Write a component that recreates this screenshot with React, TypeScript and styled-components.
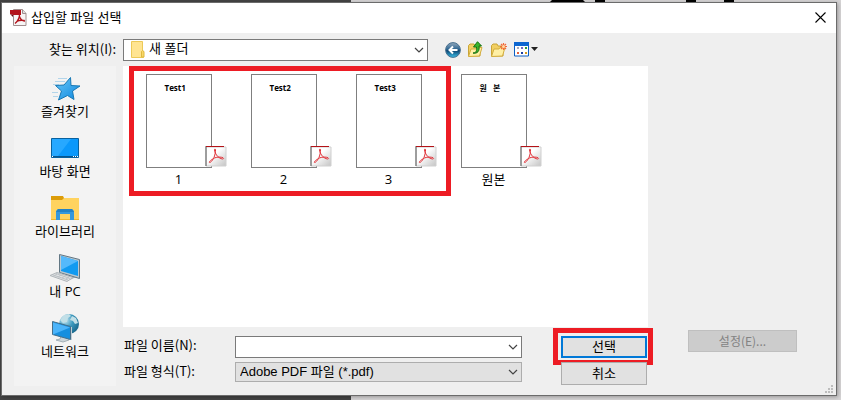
import React from "react";
import styled, { createGlobalStyle } from "styled-components";

const GlobalStyle = createGlobalStyle`
  *, *::before, *::after { box-sizing: border-box; }
  body { margin: 0; color: #000; }
  body, button, input, select {
    font-family: "Open Sans", "Noto Sans CJK KR", sans-serif;
    font-size: 13px;
    line-height: 18px;
  }
`;

const gulimLike = `"Liberation Sans", "Noto Sans CJK KR", sans-serif`;

const Backdrop = styled.div`
  position: relative;
  display: flex;
  min-height: 100vh;
  padding: 2px 4px 4px 1px;
  background: linear-gradient(to right, #444 351px, #d6d4d5 351px);
`;

const BackdropInk = styled.svg`
  position: absolute;
  top: 0;
  left: 351px;
`;

const Dialog = styled.section`
  position: relative;
  display: flex;
  flex: 1;
  flex-direction: column;
  min-width: 0;
  border: 1px solid #6b6b6b;
  background: #efefef;
  box-shadow: 1px 1px 4px rgba(0, 0, 0, 0.3);
`;

const TitleBar = styled.header`
  display: flex;
  align-items: center;
  gap: 4px;
  height: 30px;
  padding: 0 10px 2px 8px;
  background: #fff;
`;

const Title = styled.h1`
  flex: 1;
  margin: 0;
  font-size: 13px;
  font-weight: 400;
`;

const PlainButton = styled.button`
  display: flex;
  padding: 0;
  border: 0;
  background: none;
`;

const Body = styled.div`
  display: grid;
  flex: 1;
  grid-template-columns: 102px minmax(0, 1fr) 181px;
  grid-template-rows: 33px 1fr;
  column-gap: 7px;
  padding: 0 0 9px 12px;
`;

const LookInLabel = styled.label`
  align-self: center;
  padding-bottom: 2px;
  font-family: "Noto Sans CJK KR", sans-serif;
  text-align: right;
`;

const Toolbar = styled.div`
  display: flex;
  align-items: center;
`;

const ToolButtons = styled.div`
  display: flex;
  align-items: center;
  gap: 7px;
  margin-left: 17px;
`;

const Combo = styled.div<{ $tone: "white" | "gray"; $width?: string }>`
  position: relative;
  display: flex;
  align-items: center;
  width: ${(p) => p.$width ?? "100%"};
  height: ${(p) => (p.$tone === "gray" ? "20px" : "22px")};
  border: 1px solid ${(p) => (p.$tone === "gray" ? "#adadad" : "#7a7a7a")};
  background: ${(p) => (p.$tone === "gray" ? "#e1e1e1" : "#fff")};
`;

const Select = styled.select<{ $indent: number }>`
  appearance: none;
  width: 100%;
  height: 100%;
  padding: 0 20px 1px ${(p) => p.$indent}px;
  border: 0;
  outline: 0;
  background: transparent;
  color: #000;
  font-family: ${gulimLike};
`;

const TextInput = styled.input`
  flex: 1;
  min-width: 0;
  height: 100%;
  padding: 0 4px;
  border: 0;
  outline: 0;
  background: transparent;
`;

const ComboMark = styled.span<{ $side: "left" | "right" }>`
  position: absolute;
  ${(p) => (p.$side === "left" ? "left: 7px;" : "right: 2px;")}
  display: flex;
  pointer-events: none;
`;

const DropButton = styled(PlainButton)`
  margin-right: 2px;
`;

const Places = styled.nav`
  display: flex;
  flex-direction: column;
  gap: 10px;
  padding-top: 7px;
  background: #f3f3f3;
`;

const Place = styled.button`
  display: flex;
  flex-direction: column;
  align-items: center;
  height: 50px;
  padding: 0;
  border: 0;
  background: none;
  line-height: 16px;
`;

const Main = styled.main`
  display: flex;
  flex-direction: column;
  min-width: 0;
`;

const FileList = styled.ul`
  position: relative;
  display: flex;
  flex: 1;
  flex-wrap: wrap;
  align-content: flex-start;
  min-height: 261px;
  margin: 0;
  padding: 8px 3px;
  background: #fff;
  list-style: none;
`;

const FileItem = styled.li`
  display: flex;
  flex-direction: column;
  align-items: center;
  gap: 2px;
  width: 105px;
`;

const Thumb = styled.div`
  position: relative;
  width: 66px;
  height: 94px;
  padding: 4px 0 0 18px;
  border: 1px solid #7f7f7f;
  background: #fff;
  font-size: 8px;
  font-weight: 700;
  white-space: pre;
`;

const Badge = styled.span`
  position: absolute;
  right: -16px;
  bottom: 0;
  display: flex;
`;

const FileMark = styled.span`
  position: absolute;
  top: 0;
  left: 6px;
  width: 322px;
  height: 130px;
  border: 5px solid #ed1c24;
  pointer-events: none;
`;

const Form = styled.form`
  display: grid;
  grid-template-columns: 105px minmax(0, 1fr) 86px;
  grid-template-rows: 22px 24px;
  gap: 4px 0;
  align-items: start;
  padding: 9px 1px 0;
`;

const FieldLabel = styled.label`
  font-family: "Noto Sans CJK KR", sans-serif;
  white-space: nowrap;
`;

const Field = styled.div`
  display: flex;
  padding: 0 39px 0 6px;
`;

const ButtonSlot = styled.div`
  position: relative;
  display: flex;
`;

const PushButton = styled.button<{ $primary?: boolean }>`
  width: 100%;
  height: ${(p) => (p.$primary ? "22px" : "23px")};
  padding: 0 0 2px;
  border: ${(p) => (p.$primary ? "2px solid #0078d7" : "1px solid #adadad")};
  background: #e1e1e1;
  color: #000;
  line-height: 16px;

  &:disabled {
    height: 22px;
    padding: 0;
    border-color: #bfbfbf;
    background: #ccc;
    color: #838383;
    font-family: "Noto Sans CJK KR", sans-serif;
    font-size: 12px;
  }
`;

const ButtonMark = styled.span`
  position: absolute;
  inset: -8px -6px -7px -8px;
  border: 5px solid #ed1c24;
  pointer-events: none;
`;

const Aside = styled.aside`
  align-self: end;
  width: 109px;
  margin: 0 0 34px 33px;
`;

const Grip = styled.svg`
  position: absolute;
  right: 3px;
  bottom: 2px;
`;

const Chevron = () => (
  <svg width="12" height="12" viewBox="0 0 12 12" fill="none" aria-hidden="true">
    <path d="M2 4l4 4 4-4" stroke="#444" strokeWidth="1.2" />
  </svg>
);

const AcrobatIcon = () => (
  <svg width="17" height="17" viewBox="0 0 17 17" aria-hidden="true">
    <path d="M3.500.5h9l3.500 4v12H3.500z" fill="#f7f5f5" stroke="#a08e8e" />
    <path d="M12.500.5v4H16" fill="#ddd" stroke="#a08e8e" />
    <path d="M0 1h11v5H3L0 5z" fill="#b3131b" />
    <path d="M0 5l3 1v2z" fill="#65080c" />
    <path d="M9.500 4c.3 4-1.500 8-4.500 10.500M9.500 7.500c.8 2.500 2.500 4.500 5.500 4.500M6.500 12.500c2-1 5-1.500 8-1" fill="none" stroke="#b3131b" strokeWidth="1.300" />
  </svg>
);

const CloseIcon = () => (
  <svg width="11" height="11" viewBox="0 0 11 11" aria-hidden="true">
    <path d="M.5.5l10 10m0-10l-10 10" stroke="#000" strokeWidth="1.1" />
  </svg>
);

const FolderIcon = () => (
  <svg width="14" height="17" viewBox="0 0 14 17" aria-hidden="true">
    <path d="M.5.500h11v9l1 1v6H.5z" fill="#ffe491" stroke="#ecc957" />
    <path d="M10.500 16v-5.500l1-1 1.500 1V16z" fill="#f9d869" stroke="#dfb93f" />
  </svg>
);

const BackIcon = () => (
  <svg width="16" height="16" viewBox="0 0 16 16" aria-hidden="true">
    <defs>
      <linearGradient id="back" x1="0" y1="0" x2="0" y2="1">
        <stop offset="0" stopColor="#93a9bd" />
        <stop offset=".45" stopColor="#2d6591" />
        <stop offset=".55" stopColor="#0e4673" />
        <stop offset="1" stopColor="#39c0ea" />
      </linearGradient>
    </defs>
    <circle cx="8" cy="8" r="7.400" fill="url(#back)" stroke="#49708f" />
    <path d="M12.500 8H5m3-3.500L4.500 8 8 11.500" fill="none" stroke="#fff" strokeWidth="2" />
  </svg>
);

const OpenFolder = () => (
  <>
    <path d="M.5 15V4.500L2 3h4l1 2h5v10z" fill="#f1cf62" stroke="#c9a437" />
    <path d="M.5 15.500L3 8h5l1-1.500h5L11.500 15z" fill="#fff0a5" stroke="#d3ad3e" />
  </>
);

const UpIcon = () => (
  <svg width="16" height="17" viewBox="0 0 16 17" aria-hidden="true">
    <OpenFolder />
    <path d="M5 12c3 0 4-2 3.500-6H5.500L9.500.700 13.500 5H11c.8 5-1.500 8-6 7z" fill="#39b52b" stroke="#14710f" />
  </svg>
);

const NewFolderIcon = () => (
  <svg width="16" height="17" viewBox="0 0 16 17" aria-hidden="true">
    <OpenFolder />
    <path d="M12.500 2v7M9 5.500h7M10 3l5 5M15 3l-5 5" stroke="#f2693a" strokeWidth="1.200" />
    <circle cx="12.500" cy="5.500" r="1.500" fill="#ffd9a0" />
  </svg>
);

const ViewIcon = () => (
  <svg width="25" height="15" viewBox="0 0 25 15" aria-hidden="true">
    <path d="M.5.500h14v13.500H.5z" fill="#fff" stroke="#0c5fc4" />
    <path d="M0 0h15v4H0z" fill="#0c66d0" />
    <path d="M3 5h2v2H3z" fill="#a9a9ba" />
    <path d="M7 5h2v2H7z" fill="#7467c2" />
    <path d="M11 5h2v2h-2z" fill="#2c9b3a" />
    <path d="M3 10h2v2H3z" fill="#e2603c" />
    <path d="M7 10h2v2H7z" fill="#1b3fa3" />
    <path d="M11 10h2v2h-2z" fill="#d49a1e" />
    <path d="M17 5h7l-3.500 4z" fill="#222" />
  </svg>
);

const StarIcon = () => (
  <svg width="32" height="30" viewBox="0 0 32 30" aria-hidden="true">
    <defs>
      <linearGradient id="star" x1="0" y1="0" x2="1" y2="1">
        <stop offset="0" stopColor="#6ac8f8" />
        <stop offset="1" stopColor="#0c86de" />
      </linearGradient>
    </defs>
    <path d="M9 5.500h9M6 8.500h10M4 11.500h6M3 19.500h6M4 23.500h5" stroke="#b3d5ea" />
    <path d="M21.500 4.500l.5 8 9 .5-7.500 5 1.500 8.500-6.500-4-9 4.500 3-9-6-5.500 8.500-.5z" fill="url(#star)" stroke="#1878b4" />
  </svg>
);

const DesktopIcon = () => (
  <svg width="32" height="30" viewBox="0 0 32 30" aria-hidden="true">
    <path d="M2.500 5.500h27v19h-27z" fill="#0b98fb" stroke="#08619f" />
    <path d="M3 6h19L9 23H3z" fill="#27a8ff" />
    <path d="M3 23.500h26" stroke="#06558f" />
    <path d="M3 23.500h1m20 0h1m1 0h1m1 0h1" stroke="#fff" />
  </svg>
);

const LibraryIcon = () => (
  <svg width="32" height="30" viewBox="0 0 32 30" aria-hidden="true">
    <path d="M2 3h12l1 2v5H2z" fill="#dc9c09" />
    <path d="M2 7h11l2-2h15v22H2z" fill="#ffd35f" />
    <path d="M2 26h28v1H2z" fill="#efb52f" />
    <path d="M7 27V18l2-2h14l2 2v9h-4v-6H11v6z" fill="#3598db" />
    <path d="M9 16h14l2 3H7z" fill="#2382c5" />
  </svg>
);

const ComputerIcon = () => (
  <svg width="32" height="30" viewBox="0 0 32 30" aria-hidden="true">
    <path d="M16 19l6 2v2l5 1-6 3-6-2z" fill="#adb9c1" />
    <path d="M10.500 1.500l20 5v19l-20-6z" fill="#bac7cf" stroke="#627784" />
    <path d="M12 3l17 5v15l-17-5z" fill="#119af0" />
    <path d="M12 3l17 5-17 9z" fill="#55b9fb" />
    <path d="M1 22.500l7-3 16 5-6 4z" fill="#dfe1e3" stroke="#b0b6ba" />
    <path d="M4 22l15 5M7 20.500l14 5M8 21l-3 2m7-1l-3 2m7-1l-3 2m7-1l-3 2" stroke="#bcc2c6" />
  </svg>
);

const NetworkIcon = () => (
  <svg width="32" height="30" viewBox="0 0 32 30" aria-hidden="true">
    <defs>
      <radialGradient id="globe" cx=".3" cy=".3" r=".8">
        <stop offset="0" stopColor="#c9e8f4" />
        <stop offset=".5" stopColor="#3c99be" />
        <stop offset="1" stopColor="#176489" />
      </radialGradient>
    </defs>
    <circle cx="20" cy="11" r="10" fill="url(#globe)" />
    <path d="M11 7l4-5 5-1 2 2-3 2-1 4-4 1zm12-4l4 2 2 5-3 1-2-3-3-1z" fill="#c1dfe7" />
    <path d="M12 23l7 2 1 2-6 2-7-2 4-1z" fill="#ccd5da" stroke="#a3b0b7" />
    <path d="M3.500 8.500l18 5v13l-18-5z" fill="#168fdf" stroke="#456f8a" />
    <path d="M4 9.500l17 5-17 7z" fill="#4bb4fa" />
    <path d="M22.500 14v13" stroke="#c0ced7" />
  </svg>
);

const PdfBadge = () => (
  <svg width="23" height="22" viewBox="0 0 23 22" aria-hidden="true">
    <defs>
      <linearGradient id="badge" x1="0" y1="0" x2="1" y2="1">
        <stop offset=".4" stopColor="#fff" />
        <stop offset="1" stopColor="#c4c4c4" />
      </linearGradient>
    </defs>
    <path d="M2 2h20v19H2z" fill="url(#badge)" stroke="#d0d0d0" />
    <path d="M2 1v20" stroke="#555" />
    <path d="M2 1.500h18" stroke="#b41217" />
    <path
      d="M11 4c-1 0-.5 3 1.500 6s6.500 5 7 3.500-6-2-9-.5-6 4-5 4.500 4-3 5-6.500S12 4 11 4z"
      fill="none"
      stroke="#e2333a"
    />
  </svg>
);

const places = [
  { name: "즐겨찾기", Icon: StarIcon },
  { name: "바탕 화면", Icon: DesktopIcon },
  { name: "라이브러리", Icon: LibraryIcon },
  { name: "내 PC", Icon: ComputerIcon },
  { name: "네트워크", Icon: NetworkIcon },
];

const files = [
  { name: "1", heading: "Test1" },
  { name: "2", heading: "Test2" },
  { name: "3", heading: "Test3" },
  { name: "원본", heading: "원   본" },
];

const tools = [
  { name: "뒤로", Icon: BackIcon },
  { name: "한 단계 위로", Icon: UpIcon },
  { name: "새 폴더 만들기", Icon: NewFolderIcon },
  { name: "보기 메뉴", Icon: ViewIcon },
];

export default function App() {
  return (
    <>
      <GlobalStyle />
      <Backdrop>
        <BackdropInk width="400" height="2" aria-hidden="true">
          <path d="M201 0h31l2 2h-35zM244 0h10v2h-10zM335 0h10v2h-10zM373 0h10v2h-10z" />
        </BackdropInk>
        <Dialog aria-labelledby="dialog-title">
          <TitleBar>
            <AcrobatIcon />
            <Title id="dialog-title">삽입할 파일 선택</Title>
            <PlainButton type="button" aria-label="닫기">
              <CloseIcon />
            </PlainButton>
          </TitleBar>
          <Body>
            <LookInLabel htmlFor="look-in">찾는 위치(I):</LookInLabel>
            <Toolbar>
              <Combo $tone="white" $width="305px">
                <ComboMark $side="left">
                  <FolderIcon />
                </ComboMark>
                <Select id="look-in" $indent={25}>
                  <option>새 폴더</option>
                </Select>
                <ComboMark $side="right">
                  <Chevron />
                </ComboMark>
              </Combo>
              <ToolButtons>
                {tools.map(({ name, Icon }) => (
                  <PlainButton key={name} type="button" aria-label={name}>
                    <Icon />
                  </PlainButton>
                ))}
              </ToolButtons>
            </Toolbar>
            <span />
            <Places>
              {places.map(({ name, Icon }) => (
                <Place key={name} type="button">
                  <Icon />
                  {name}
                </Place>
              ))}
            </Places>
            <Main>
              <FileList>
                {files.map(({ name, heading }) => (
                  <FileItem key={name}>
                    <Thumb>
                      {heading}
                      <Badge>
                        <PdfBadge />
                      </Badge>
                    </Thumb>
                    {name}
                  </FileItem>
                ))}
                <FileMark />
              </FileList>
              <Form onSubmit={(e) => e.preventDefault()}>
                <FieldLabel htmlFor="file-name">파일 이름(N):</FieldLabel>
                <Field>
                  <Combo $tone="white">
                    <TextInput id="file-name" type="text" />
                    <DropButton type="button" aria-label="파일 이름 목록">
                      <Chevron />
                    </DropButton>
                  </Combo>
                </Field>
                <ButtonSlot>
                  <PushButton type="submit" $primary>
                    선택
                  </PushButton>
                  <ButtonMark />
                </ButtonSlot>
                <FieldLabel htmlFor="file-type">파일 형식(T):</FieldLabel>
                <Field>
                  <Combo $tone="gray">
                    <Select id="file-type" $indent={4}>
                      <option>Adobe PDF 파일 (*.pdf)</option>
                    </Select>
                    <ComboMark $side="right">
                      <Chevron />
                    </ComboMark>
                  </Combo>
                </Field>
                <ButtonSlot>
                  <PushButton type="button">취소</PushButton>
                </ButtonSlot>
              </Form>
            </Main>
            <Aside>
              <PushButton type="button" disabled>
                설정(E)...
              </PushButton>
            </Aside>
          </Body>
          <Grip width="8" height="8" viewBox="0 0 8 8" aria-hidden="true">
            <path d="M6 0h2v2H6zM3 3h2v2H3zM6 3h2v2H6zM0 6h2v2H0zM3 6h2v2H3zM6 6h2v2H6z" fill="#bdbdbd" />
          </Grip>
        </Dialog>
      </Backdrop>
    </>
  );
}
